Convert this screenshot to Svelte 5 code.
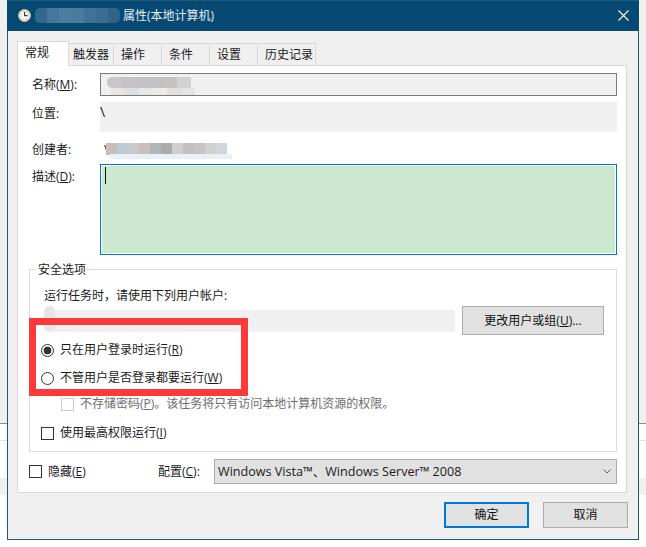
<script>
  const tabs = [
    { label: '触发器', width: 45, pad: 4 },
    { label: '操作', width: 48, pad: 7 },
    { label: '条件', width: 48, pad: 7 },
    { label: '设置', width: 48, pad: 7 },
    { label: '历史记录', width: 58, pad: 7 }
  ];
  const titleBlur = ['#32688c', '#45779a', '#4d7d9e', '#4a7b9c', '#3f7295', '#3a6e91', '#2f6488'];
  const nameBlur = ['#c9c6c9', '#c6c3c6', '#c4c1c5', '#c4c1c4', '#c5c2c2', '#d2d2d4'];
  const nameBlur2 = ['#e6e5e3', '#dedfe0', '#e8e8e7', '#ebebea', '#e2e0df', '#e4e4e4'];
  const ownerBlur = ['#c4bfb9', '#bfc9d2', '#c9c8ca', '#c9c0bd', '#b4b5b7', '#aaacab', '#cfcfcf', '#c3c1bf', '#c4c3c6', '#d0d0ce', '#d4d5da'];
</script>

<div class="desk">
  <div class="band first"></div>
  <div class="band second"></div>
  <div class="band third"></div>
  <div class="band fourth"></div>

  <div class="win">
    <header class="title">
      <svg class="clock" width="13" height="13" viewBox="0 0 13 13">
        <circle cx="6.5" cy="6.5" r="6" fill="#f3efe2" stroke="#c9b98a" />
        <circle cx="6.5" cy="6.5" r="4.4" fill="#fff" stroke="#b5b5ad" stroke-width="0.6" />
        <path d="M6.5 3v3.6h3" fill="none" stroke="#333" stroke-width="1.1" />
      </svg>
      <div class="title-blur">
        {#each titleBlur as c}<i style:background={c}></i>{/each}
      </div>
      <span class="title-text">属性(本地计算机)</span>
      <svg class="close" width="11" height="11" viewBox="0 0 11 11">
        <path d="M.5.5l10 10M10.5.5l-10 10" stroke="#fff" stroke-width="1.1" fill="none" />
      </svg>
    </header>

    <div class="body">
      <nav class="tabs">
        <div class="tab active">常规</div>
        {#each tabs as t}
          <div class="tab" style:width="{t.width}px" style:padding-left="{t.pad}px">{t.label}</div>
        {/each}
      </nav>

      <section class="panel">
        <div class="row name-row">
          <span class="lab">名称(<u>M</u>):</span>
          <div class="name-field">
            <div class="mosaic top">{#each nameBlur as c}<i style:background={c}></i>{/each}</div>
            <div class="mosaic low">{#each nameBlur2 as c}<i style:background={c}></i>{/each}</div>
          </div>
        </div>
        <div class="row loc-row">
          <span class="lab">位置:</span>
          <div class="loc-field">\</div>
        </div>
        <div class="row owner-row">
          <span class="lab">创建者:</span>
          <div class="owner">
            <span class="slash">\</span>
            <div class="mosaic owner-top">{#each ownerBlur as c}<i style:background={c}></i>{/each}</div>
            <div class="owner-low"></div>
          </div>
        </div>
        <div class="row desc-row">
          <span class="lab">描述(<u>D</u>):</span>
          <div class="desc"><span class="caret"></span></div>
        </div>

        <fieldset class="group">
          <legend>安全选项</legend>
          <div class="run-as">运行任务时，请使用下列用户帐户:</div>
          <div class="user-row">
            <div class="user-field"><span class="user-smear"></span></div>
            <button class="btn change">更改用户或组(<u>U</u>)...</button>
          </div>
          <div class="opt r1"><span class="radio on"></span><span>只在用户登录时运行(<u>R</u>)</span></div>
          <div class="opt r2"><span class="radio"></span><span>不管用户是否登录都要运行(<u>W</u>)</span></div>
          <div class="opt r3 dim"><span class="check faint"></span><span>不存储密码(<u>P</u>)。该任务将只有访问本地计算机资源的权限。</span></div>
          <div class="opt r4"><span class="check"></span><span>使用最高权限运行(<u>I</u>)</span></div>
        </fieldset>

        <div class="config">
          <span class="check"></span>
          <span class="hide">隐藏(<u>E</u>)</span>
          <span class="cfg">配置(<u>C</u>):</span>
          <div class="combo">
            <span>Windows Vista™、Windows Server™ 2008</span>
            <svg width="8" height="5" viewBox="0 0 8 5"><path d="M.5.5L4 4 7.5.5" fill="none" stroke="#606060" /></svg>
          </div>
        </div>
      </section>

      <footer class="foot">
        <button class="btn main">确定</button>
        <button class="btn">取消</button>
      </footer>
    </div>
  </div>

  <div class="mark"></div>
</div>

<style>
  :global(body) {
    margin: 0;
    background: #fff;
  }
  .desk {
    position: relative;
    width: 646px;
    height: 547px;
    overflow: hidden;
    background: #fff;
    font: 12px/18px "Open Sans", "Noto Sans CJK SC", sans-serif;
    color: #1a1a1a;
  }
  .band {
    position: absolute;
    left: 0;
    right: 0;
  }
  .first { top: 0; height: 423px; background: #f0f0f0; }
  .second { top: 423px; height: 1px; background: #8c8c8c; }
  .third { top: 440px; height: 1px; background: #e2e2e2; }
  .fourth { top: 478px; height: 17px; background: #f0f0f0; }

  .win {
    position: absolute;
    left: 7px;
    top: 0;
    width: 632px;
    height: 540px;
    box-sizing: border-box;
    border: 1px solid #1d5878;
    border-top: 0;
    background: #f0f0f0;
  }
  .title {
    height: 31px;
    display: flex;
    align-items: center;
    margin: 0 -1px;
    padding-left: 11px;
    background: #064a73;
    box-shadow: inset 0 1px #1f5a80;
    color: #e6eef4;
  }
  .clock { flex: none; }
  .title-blur {
    display: flex;
    width: 85px;
    height: 15px;
    margin-left: 4px;
    border-radius: 5px;
    overflow: hidden;
    filter: blur(0.6px);
  }
  .title-blur i { flex: 1; }
  .title-text { margin-left: 3px; }
  .close { margin-left: auto; margin-right: 10px; }

  .body { padding: 10px 11px 0 9px; }
  .tabs {
    display: flex;
    align-items: flex-end;
    height: 24px;
    position: relative;
    z-index: 1;
  }
  .tab {
    box-sizing: border-box;
    height: 22px;
    padding-top: 2px;
    border-top: 1px solid #d9d9d9;
    border-right: 1px solid #d9d9d9;
    background: #f0f0f0;
    white-space: nowrap;
  }
  .tab.active {
    width: 52px;
    height: 25px;
    margin-bottom: -1px;
    padding: 2px 0 0 7px;
    border-left: 1px solid #d9d9d9;
    background: #fff;
  }

  .panel {
    box-sizing: border-box;
    height: 428px;
    padding: 7px 9px 0 11px;
    border: 1px solid #d9d9d9;
    background: #fff;
  }
  .row { display: flex; }
  .lab { width: 71px; flex: none; padding-left: 3px; box-sizing: border-box; }
  .name-row { align-items: center; height: 23px; }
  .name-field {
    flex: 1;
    align-self: stretch;
    box-sizing: border-box;
    padding: 3px 0 0 6px;
    border: 1px solid #7a7a7a;
    background: #f0f0f0;
    overflow: hidden;
  }
  .mosaic { display: flex; }
  .mosaic i { width: 11px; flex: none; }
  .mosaic.top { height: 11px; width: 84px; border-radius: 5px 0 0 5px; overflow: hidden; }
  .mosaic.top i { width: 14px; }
  .mosaic.low { height: 8px; width: 84px; margin-left: 4px; }
  .mosaic.low i { width: 14px; }

  .loc-row { margin-top: 6px; height: 30px; }
  .loc-row .lab { padding-top: 3px; }
  .loc-field { flex: 1; background: #f0f0f0; line-height: 20px; font-size: 14px; }

  .owner-row { margin-top: 9px; height: 18px; }
  .owner { flex: 1; padding-left: 4px; position: relative; display: flex; }
  .slash { width: 2px; }
  .owner-top { height: 12px; margin-top: 2px; }
  .owner-low {
    position: absolute;
    left: 10px;
    top: 13px;
    width: 122px;
    height: 5px;
    background: #e8f1fa;
  }

  .desc-row { margin-top: 5px; height: 91px; }
  .desc-row .lab { padding-top: 4px; }
  .desc {
    flex: 1;
    box-sizing: border-box;
    padding: 2px 0 0 4px;
    border: 1px solid #0078d7;
    background: #cde8d0;
    box-shadow: inset 0 0 0 1px #fff;
  }
  .caret { display: block; width: 1px; height: 17px; background: #111; }

  .group {
    box-sizing: border-box;
    height: 193px;
    min-width: 0;
    margin: 4px 0 0;
    padding: 0;
    border: 1px solid #dcdcdc;
  }
  .group legend {
    margin-left: 7px;
    padding: 2px 1px 0;
    line-height: 18px;
  }
  .run-as { margin: 8px 0 0 14px; }
  .user-row {
    display: flex;
    align-items: center;
    gap: 7px;
    margin: 1px 0 0 14px;
  }
  .user-field {
    width: 411px;
    height: 22px;
    background: #f0f0f0;
  }
  .user-smear {
    display: block;
    width: 11px;
    height: 25px;
    margin-top: -4px;
    border-radius: 5px;
    background: #e6e6e6;
  }
  .btn {
    box-sizing: border-box;
    width: 85px;
    height: 26px;
    padding: 0;
    border: 1px solid #adadad;
    background: #e1e1e1;
    font: inherit;
    color: #111;
  }
  .btn.change { width: 142px; height: 29px; }
  .btn.main { border: 2px solid #0078d7; }

  .opt { display: flex; align-items: center; gap: 6px; margin-left: 11px; }
  .r1 { margin-top: 6px; }
  .r2 { margin-top: 10px; }
  .r3 { margin-top: 8px; margin-left: 31px; }
  .r4 { margin-top: 11px; }
  .dim { color: #6d6d6d; }
  .radio {
    box-sizing: border-box;
    width: 13px;
    height: 13px;
    flex: none;
    border: 1px solid #333;
    border-radius: 50%;
    background: #fff;
  }
  .radio.on {
    background: radial-gradient(circle, #333 0 3.6px, #fff 4.2px);
  }
  .check {
    box-sizing: border-box;
    width: 13px;
    height: 13px;
    flex: none;
    border: 1px solid #333;
    background: #fff;
  }
  .check.faint { border-color: #ccc; }

  .config {
    display: flex;
    align-items: center;
    height: 25px;
    margin-top: 7px;
  }
  .hide { margin-left: 6px; width: 110px; }
  .cfg { width: 56px; }
  .combo {
    flex: 1;
    height: 100%;
    box-sizing: border-box;
    display: flex;
    align-items: center;
    justify-content: space-between;
    padding: 0 5px 0 3px;
    border: 1px solid #adadad;
    background: #e1e1e1;
    font-size: 12.6px;
  }

  .foot {
    display: flex;
    justify-content: flex-end;
    gap: 14px;
    margin: 9px -1px 0 0;
  }

  .mark {
    position: absolute;
    left: 29px;
    top: 318px;
    width: 219px;
    height: 78px;
    box-sizing: border-box;
    border: 7px solid #fc3a3a;
  }
</style>
